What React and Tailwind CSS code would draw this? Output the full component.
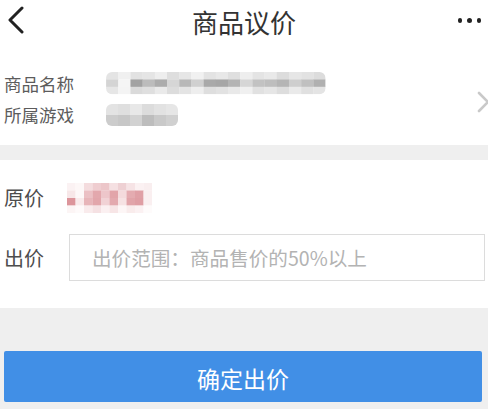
import React from 'react';

const font = { fontFamily: '"Noto Sans CJK SC", "Noto Sans", sans-serif' };

// mosaic cells for the blurred values
const nameCells = [
  ['#e4e4e4', '#f0f0f0', '#e2e2e2', '#e5e5e5', '#eeeeee', '#dedede', '#e6e6e6', '#f1f1f1', '#e3e3e3', '#e8e8e8', '#dfdfdf', '#eeeeee', '#e4e4e4', '#e9e9e9', '#dcdcdc', '#e6e6e6', '#e2e2e2', '#dcdcdc'],
  ['#d4d4d4', '#f5f5f5', '#a2a2a2', '#bcbcbc', '#acacac', '#d6d6d6', '#b8b8b8', '#d0d0d0', '#a9a9a9', '#a6a6a6', '#b4b4b4', '#d6d6d6', '#c2c2c2', '#bebebe', '#b5b5b5', '#cecece', '#c0c0c0', '#b0b0b0'],
  ['#e6e6e6', '#f4f4f4', '#dadada', '#dfdfdf', '#eaeaea', '#dcdcdc', '#e4e4e4', '#eeeeee', '#dedede', '#e2e2e2', '#e9e9e9', '#f0f0f0', '#e1e1e1', '#e6e6e6', '#dddddd', '#eaeaea', '#e0e0e0', '#e4e4e4'],
];
const gameCells = [
  ['#e3e3e3', '#dfdfdf', '#e8e8e8', '#dcdcdc', '#e2e2e2', '#e6e6e6'],
  ['#cccccc', '#c7c7c7', '#d2d2d2', '#bdbdbd', '#c9c9c9', '#d0d0d0'],
];
const priceCells = [
  ['#fbf2f3', '#fdf7f7', '#f4dcde', '#efcdd0', '#ecc6c9', '#f5e0e2', '#eed0d3', '#f6e3e5', '#fbf1f2', '#f9eeef'],
  ['#f7e7e8', '#fdf8f8', '#ebc0c4', '#e3a8ad', '#edc6ca', '#e2a4a9', '#f4dadc', '#e4abb0', '#e0a0a6', '#faeff0'],
  ['#dc959b', '#f9eaeb', '#e7b5b9', '#e2a6ab', '#f1d2d5', '#e3a9ae', '#f6e2e3', '#e1a4a9', '#df9ea4', '#faeff0'],
  ['#fcf5f5', '#fefafa', '#f9ebec', '#f5e1e3', '#fbf0f1', '#f7e5e6', '#fdf6f6', '#f9ecec', '#fbf1f2', '#fefbfb'],
];

const Mosaic = ({ cells, cw, ch, rx, className }) => {
  const w = cells[0].length * cw;
  const h = cells.length * ch;
  const id = `clip-${Math.round(w)}-${Math.round(h)}`;
  return (
    <svg width={w} height={h} viewBox={`0 0 ${w} ${h}`} className={className}>
      <defs>
        <clipPath id={id}>
          <rect width={w} height={h} rx={rx} />
        </clipPath>
      </defs>
      <g clipPath={`url(#${id})`}>
        {cells.map((row, r) =>
          row.map((c, i) => <rect key={`${r}-${i}`} x={i * cw} y={r * ch} width={cw + 0.2} height={ch + 0.2} fill={c} />)
        )}
      </g>
    </svg>
  );
};

export default function App() {
  return (
    <div className="w-[488px] h-[409px] overflow-hidden bg-white flex flex-col" style={font}>
      {/* header */}
      <div className="relative h-[45px] flex items-center justify-center shrink-0">
        <svg className="absolute left-[6px] top-[6px]" width="20" height="30" viewBox="0 0 20 30">
          <path d="M16 2 L4 14 L16 26" fill="none" stroke="#222" strokeWidth="3" strokeLinecap="round" strokeLinejoin="round" />
        </svg>
        <span className="text-[26px] leading-none text-[#333] -mt-[2px]">商品议价</span>
        <div className="absolute right-[7px] top-[18px] flex gap-[5px]">
          <span className="w-[4.5px] h-[4.5px] rounded-full bg-[#222]" />
          <span className="w-[4.5px] h-[4.5px] rounded-full bg-[#222]" />
          <span className="w-[4.5px] h-[4.5px] rounded-full bg-[#222]" />
        </div>
      </div>

      {/* goods info */}
      <div className="relative h-[100px] shrink-0 pt-[23px] pl-[4px]">
        <div className="flex items-center h-[31px]">
          <span className="w-[102px] text-[17.5px] leading-none text-[#5c5c5c]">商品名称</span>
          <Mosaic cells={nameCells} cw={12.2} ch={7.4} rx={6} />
        </div>
        <div className="flex items-center h-[31px]">
          <span className="w-[102px] text-[17.5px] leading-none text-[#5c5c5c]">所属游戏</span>
          <Mosaic cells={gameCells} cw={12} ch={11} rx={6} />
        </div>
        <svg className="absolute right-[-4px] top-[46px]" width="16" height="22" viewBox="0 0 16 22">
          <path d="M3 2 L12 11 L3 20" fill="none" stroke="#c9c9c9" strokeWidth="2.6" strokeLinecap="round" strokeLinejoin="round" />
        </svg>
      </div>

      <div className="h-[15px] bg-[#efefef] shrink-0" />

      {/* price */}
      <div className="shrink-0 pt-[14px] pb-[27px] pl-[4px] pr-[3px]">
        <div className="flex items-center h-[48px]">
          <span className="w-[63px] text-[20px] leading-none text-[#4d4d4d]">原价</span>
          <Mosaic cells={priceCells} cw={8.5} ch={7.5} rx={0} />
        </div>
        <div className="flex items-center mt-[12px]">
          <span className="w-[65px] text-[20px] leading-none text-[#4d4d4d]">出价</span>
          <div className="flex-1 h-[47px] border border-[#dcdcdc] flex items-center pl-[22px]">
            <span className="text-[19.6px] leading-none text-[#b3b3b3]">出价范围：商品售价的50%以上</span>
          </div>
        </div>
      </div>

      {/* bottom */}
      <div className="flex-1 bg-[#efefef] pt-[43px] px-[4px]">
        <button className="w-[478px] h-[51px] rounded-[2px] bg-[#418fe6] flex items-center justify-center">
          <span className="text-[23px] leading-none text-white mt-[4px]">确定出价</span>
        </button>
      </div>
    </div>
  );
}
